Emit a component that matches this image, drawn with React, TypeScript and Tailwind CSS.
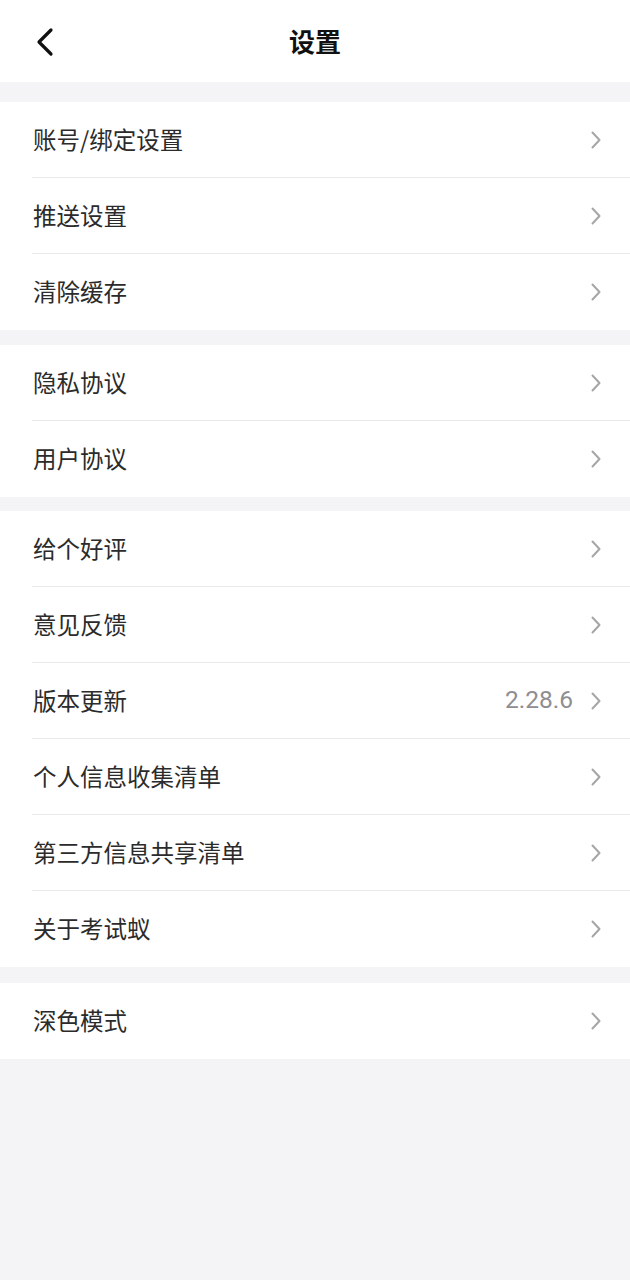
import React from "react";

type Item = { label: string; value?: string };

const groups: { gap: string; items: Item[] }[] = [
  {
    gap: "h-[20px]",
    items: [{ label: "账号/绑定设置" }, { label: "推送设置" }, { label: "清除缓存" }],
  },
  {
    gap: "h-[15px]",
    items: [{ label: "隐私协议" }, { label: "用户协议" }],
  },
  {
    gap: "h-[14px]",
    items: [
      { label: "给个好评" },
      { label: "意见反馈" },
      { label: "版本更新", value: "2.28.6" },
      { label: "个人信息收集清单" },
      { label: "第三方信息共享清单" },
      { label: "关于考试蚁" },
    ],
  },
  {
    gap: "h-[16px]",
    items: [{ label: "深色模式" }],
  },
];

function Chevron() {
  return (
    <svg width="12" height="18" viewBox="0 0 12 18" fill="none" className="shrink-0">
      <path d="M2.5 1.5 L9.5 9 L2.5 16.5" stroke="#a6a6a6" strokeWidth="2" strokeLinecap="round" strokeLinejoin="round" />
    </svg>
  );
}

export default function App() {
  return (
    <div
      className="min-h-[1280px] w-full bg-[#f4f4f6]"
      style={{ fontFamily: '"Noto Sans CJK SC", "Noto Sans", sans-serif' }}
    >
      {/* Header */}
      <div className="relative h-[82px] bg-white flex items-center justify-center">
        <button className="absolute left-[34px] top-[26px] w-[22px] h-[32px] flex items-center justify-center">
          <svg width="20" height="30" viewBox="0 0 20 30" fill="none">
            <path d="M16 3 L4 15 L16 27" stroke="#111" strokeWidth="3.2" strokeLinecap="round" strokeLinejoin="round" />
          </svg>
        </button>
        <h1 className="text-[26px] font-bold text-[#111] leading-none">设置</h1>
      </div>

      {groups.map((g, gi) => (
        <div key={gi}>
          <div className={g.gap} />
          <div className="bg-white">
            {g.items.map((it, i) => (
              <div key={it.label} className="pl-[32px]">
                <div
                  className={`flex items-center pr-[28px] ${
                    i < g.items.length - 1 ? "h-[76px] border-b border-[#e9e9eb]" : "h-[76px]"
                  }`}
                >
                  <span className="flex-1 text-[23.5px] text-[#2b2b2b] leading-none pl-[1px]">{it.label}</span>
                  {it.value && (
                    <span
                      className="text-[24.5px] text-[#8e8e92] leading-none mr-[17px]"
                      style={{ fontFamily: 'Roboto, "Noto Sans", sans-serif' }}
                    >
                      {it.value}
                    </span>
                  )}
                  <Chevron />
                </div>
              </div>
            ))}
          </div>
        </div>
      ))}
    </div>
  );
}
